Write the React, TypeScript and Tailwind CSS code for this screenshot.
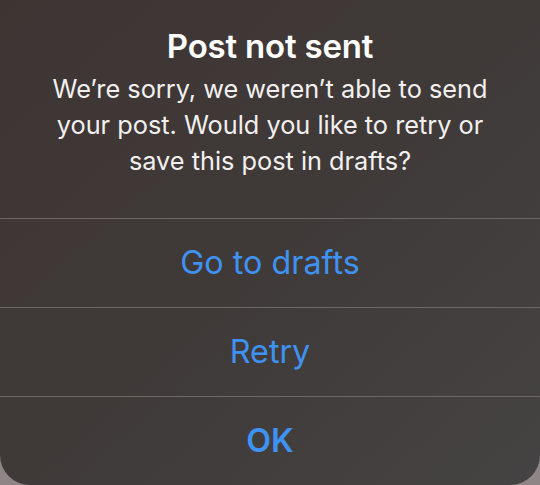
import React from 'react';

const actions = [
  { label: 'Go to drafts', bold: false },
  { label: 'Retry', bold: false },
  { label: 'OK', bold: true },
];

export default function App() {
  return (
    <div className="w-[540px] h-[485px] bg-[#8f8486] overflow-hidden font-['Inter',sans-serif]">
      <div className="w-full h-full rounded-b-[30px] bg-gradient-to-br from-[#3e3533] via-[#3f3a38] to-[#454343] flex flex-col">
        <div className="h-[218px] flex flex-col items-center pt-[24px] text-white text-center">
          <h1 className="text-[33px] leading-[44px] font-semibold tracking-[-0.2px]">Post not sent</h1>
          <p className="mt-[3px] text-[25.3px] leading-[36px] text-[#f2f0ef]">
            We’re sorry, we weren’t able to send
            <br />
            your post. Would you like to retry or
            <br />
            save this post in drafts?
          </p>
        </div>
        {actions.map(a => (
          <button
            key={a.label}
            className={`h-[89px] border-t border-[#6d6766] flex items-center justify-center text-[32.3px] text-[#3f91f2] ${
              a.bold ? 'font-semibold' : 'font-normal'
            }`}
          >
            {a.label}
          </button>
        ))}
      </div>
    </div>
  );
}
